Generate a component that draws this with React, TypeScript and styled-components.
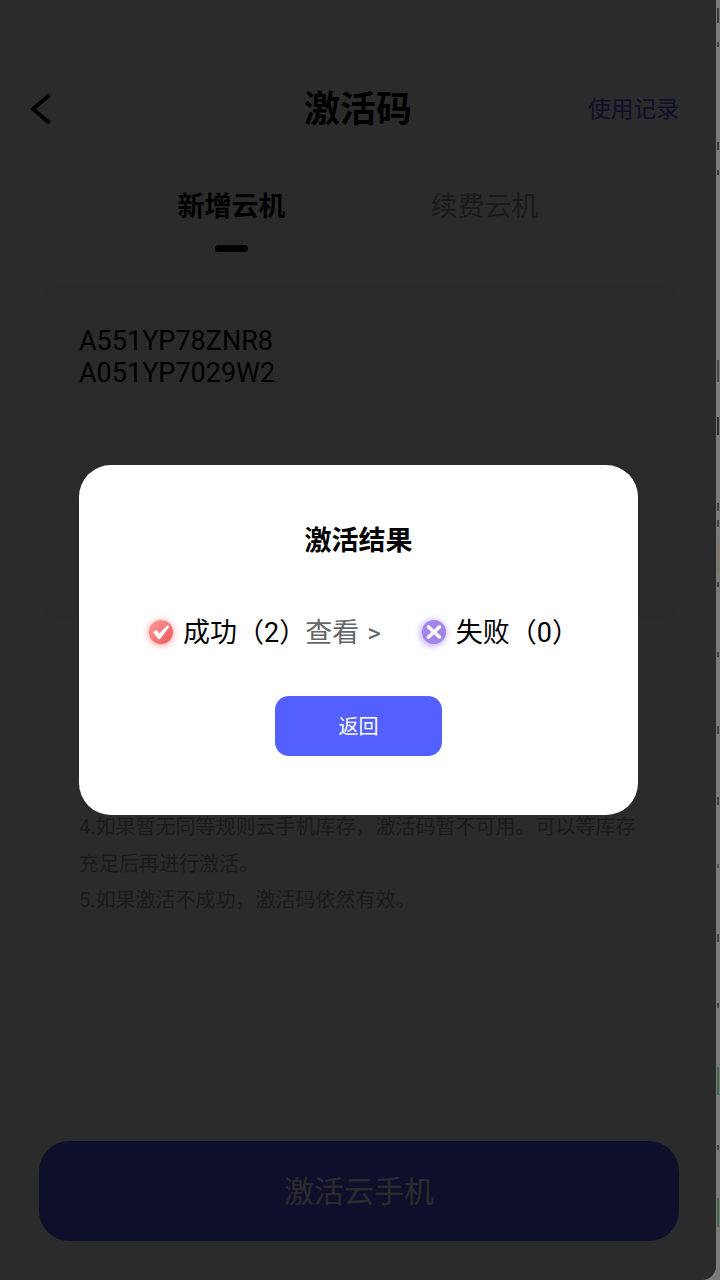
import React from 'react';
import styled, { createGlobalStyle } from 'styled-components';

const Global = createGlobalStyle`
  html, body { margin: 0; padding: 0; background: #7b7b7b; }
  * { box-sizing: border-box; }
  body { font-family: Roboto, "Noto Sans CJK SC", sans-serif; }
`;

const Viewport = styled.div`
  position: relative;
  width: 720px;
  height: 1280px;
  overflow: hidden;
  background: #7b7b7b;
`;

const Screen = styled.div`
  width: 716px;
  height: 1280px;
  display: flex;
  flex-direction: column;
  background: #fff;
  overflow: hidden;
`;

const Header = styled.header`
  height: 50px;
  margin-top: 84px;
  padding: 0 37px 0 30px;
  display: flex;
  align-items: center;
  justify-content: space-between;
  position: relative;
`;

const BackIcon = styled.svg`
  width: 22px;
  height: 32px;
  display: block;
`;

const Title = styled.h1`
  position: absolute;
  left: 0;
  right: 0;
  top: 1px;
  margin: 0;
  text-align: center;
  font-size: 36px;
  line-height: 50px;
  font-weight: 700;
  color: #000;
`;

const HeaderLink = styled.span`
  position: relative;
  top: -2px;
  font-size: 22.75px;
  color: #5460fe;
`;

const Tabs = styled.nav`
  margin-top: 53px;
  padding-left: 105px;
  display: flex;
`;

const Tab = styled.div<{ $active?: boolean }>`
  width: 253px;
  display: flex;
  flex-direction: column;
  align-items: center;
  font-size: 27px;
  line-height: 40px;
  font-weight: ${p => (p.$active ? 700 : 400)};
  color: ${p => (p.$active ? '#000' : '#999')};
`;

const TabMark = styled.i<{ $active?: boolean }>`
  display: block;
  width: 33px;
  height: 7px;
  margin-top: 18px;
  border-radius: 4px;
  background: ${p => (p.$active ? '#000' : 'transparent')};
`;

const CodeCard = styled.section`
  margin: 33px 36px 0 40px;
  height: 333px;
  padding: 40px 39px;
  border-radius: 20px;
  background: #f8f8f8;
  font-size: 27px;
  line-height: 32px;
  color: #000;
`;

const Notes = styled.div`
  margin-top: 191px;
  padding: 0 80px 0 79px;
  font-size: 20px;
  line-height: 36.5px;
  color: #a0a0a0;
`;

const ActivateButton = styled.button`
  margin: auto 37px 39px 39px;
  height: 100px;
  padding-bottom: 6px;
  border: 0;
  border-radius: 30px;
  background: #5460fe;
  color: #fff;
  font: inherit;
  font-size: 30px;
`;

const Overlay = styled.div`
  position: absolute;
  inset: 0 4px 0 0;
  background: rgba(0, 0, 0, 0.83);
`;

const CornerMask = styled.svg`
  position: absolute;
  right: 4px;
  bottom: 0;
  width: 14px;
  height: 14px;
  display: block;
`;

const EdgeMark = styled.i<{ $top: number; $height: number; $color: string }>`
  position: absolute;
  right: 1px;
  top: ${p => p.$top}px;
  width: 2px;
  height: ${p => p.$height}px;
  background: ${p => p.$color};
`;

const Modal = styled.div`
  position: absolute;
  left: 79px;
  top: 465px;
  width: 559px;
  height: 350px;
  padding-top: 54px;
  display: flex;
  flex-direction: column;
  align-items: center;
  border-radius: 32px;
  background: #fff;
`;

const ModalTitle = styled.h2`
  margin: 0;
  font-size: 27px;
  line-height: 44px;
  font-weight: 700;
  color: #000;
`;

const ResultRow = styled.div`
  margin-top: 47px;
  margin-left: 11px;
  height: 44px;
  display: flex;
  align-items: center;
`;

const Result = styled.div`
  display: flex;
  align-items: center;
  font-size: 27px;
  line-height: 40px;
  color: #000;
  position: relative;
  top: 1px;
  & + & { margin-left: 41px; }
`;

const StatusIcon = styled.svg`
  position: relative;
  top: -1px;
  width: 36px;
  height: 36px;
  margin: 0 4px 0 -6px;
  display: block;
  overflow: visible;
`;

const ViewLink = styled.span`
  margin-left: -1px;
  color: #666;
`;

const ViewArrow = styled.span`
  margin-left: 8px;
  font-size: 26px;
  color: #666;
`;

const ReturnButton = styled.button`
  margin-top: 42px;
  width: 167px;
  height: 60px;
  padding-bottom: 3px;
  border: 0;
  border-radius: 14px;
  background: #5460fe;
  color: #fff;
  font: inherit;
  font-size: 20px;
`;

const edgeMarks = [
  { top: 8, height: 15, color: '#3a3a3a' },
  { top: 42, height: 5, color: '#444' },
  { top: 142, height: 8, color: '#3a3a3a' },
  { top: 170, height: 5, color: '#3a3a3a' },
  { top: 360, height: 22, color: '#4a4a4a' },
  { top: 417, height: 18, color: '#2c2c2c' },
  { top: 503, height: 8, color: '#444' },
  { top: 520, height: 7, color: '#444' },
  { top: 537, height: 36, color: '#7f7664' },
  { top: 582, height: 5, color: '#444' },
  { top: 652, height: 5, color: '#444' },
  { top: 726, height: 8, color: '#444' },
  { top: 797, height: 8, color: '#444' },
  { top: 864, height: 4, color: '#555' },
  { top: 934, height: 8, color: '#444' },
  { top: 1003, height: 5, color: '#444' },
  { top: 1067, height: 28, color: '#3f6a48' },
  { top: 1145, height: 5, color: '#444' },
  { top: 1198, height: 29, color: '#3f6a48' },
];

export default function App() {
  return (
    <Viewport>
      <Global />
      <Screen>
        <Header>
          <BackIcon viewBox="0 0 22 32" fill="none">
            <path d="M19.5 2 3 16l16.5 14" stroke="#000" strokeWidth="4" />
          </BackIcon>
          <Title>激活码</Title>
          <HeaderLink>使用记录</HeaderLink>
        </Header>
        <Tabs>
          <Tab $active>新增云机<TabMark $active /></Tab>
          <Tab>续费云机<TabMark /></Tab>
        </Tabs>
        <CodeCard>A551YP78ZNR8<br />A051YP7029W2</CodeCard>
        <Notes>
          4.如果暂无同等规则云手机库存，激活码暂不可用。可以等库存充足后再进行激活。<br />
          5.如果激活不成功，激活码依然有效。
        </Notes>
        <ActivateButton>激活云手机</ActivateButton>
      </Screen>
      <Overlay />
      <CornerMask viewBox="0 0 14 14">
        <path d="M14 0v14H0A14 14 0 0 0 14 0z" fill="#7b7b7b" />
      </CornerMask>
      {edgeMarks.map(m => (
        <EdgeMark key={m.top} $top={m.top} $height={m.height} $color={m.color} />
      ))}
      <Modal>
        <ModalTitle>激活结果</ModalTitle>
        <ResultRow>
          <Result>
            <StatusIcon viewBox="0 0 36 36">
              <defs>
                <filter id="soft" x="-50%" y="-50%" width="200%" height="200%"><feGaussianBlur stdDeviation="3" /></filter>
                <linearGradient id="rf" x1="0" y1="0" x2="1" y2="1"><stop offset="0" stopColor="#ff9c9a" /><stop offset="1" stopColor="#ee5459" /></linearGradient>
              </defs>
              <circle cx="18" cy="19" r="13" fill="#ff7377" opacity="0.6" filter="url(#soft)" />
              <circle cx="18" cy="18" r="12" fill="url(#rf)" />
              <path d="M10 18.5l3.2-2.4 3.2 3.2L24.5 11l2 1.6-9.6 12.6h-1.4z" fill="#fff" />
            </StatusIcon>
            成功（2）<ViewLink>查看</ViewLink><ViewArrow>&gt;</ViewArrow>
          </Result>
          <Result>
            <StatusIcon viewBox="0 0 36 36">
              <defs>
                <filter id="softp" x="-50%" y="-50%" width="200%" height="200%"><feGaussianBlur stdDeviation="3" /></filter>
              </defs>
              <circle cx="17" cy="19" r="13" fill="#9273f0" opacity="0.6" filter="url(#softp)" />
              <circle cx="18" cy="18" r="12" fill="#a284ea" />
              <path d="M12.5 13l11 10M23.5 13l-11 10" fill="none" stroke="#fff" strokeWidth="3.6" strokeLinecap="round" />
            </StatusIcon>
            失败（0）
          </Result>
        </ResultRow>
        <ReturnButton>返回</ReturnButton>
      </Modal>
    </Viewport>
  );
}
